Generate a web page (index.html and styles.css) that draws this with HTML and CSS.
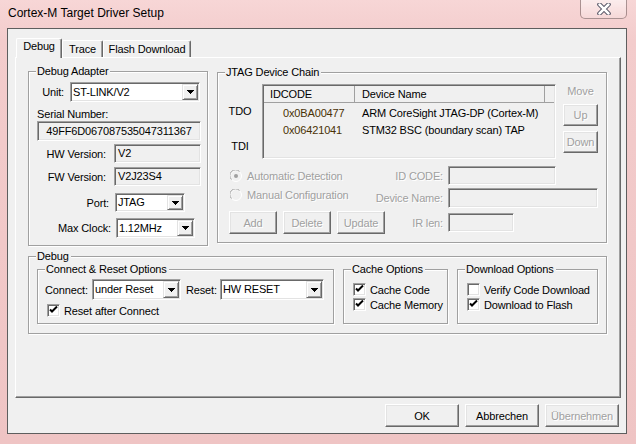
FILE: index.html
```html
<!DOCTYPE html>
<html>
<head>
    <title>Cortex-M Target Driver Setup</title>
    <link rel="stylesheet" href="styles.css">
</head>
<body>
<div class="window">
    <div class="titlebar">
        <span class="title">Cortex-M Target Driver Setup</span>
        <div class="close-btn">
            <svg width="14" height="12" viewBox="0 0 14 12">
                <path d="M2.5 1.5L11.5 10.5M11.5 1.5L2.5 10.5" stroke="#4b4b5c" stroke-width="4.5" stroke-linecap="round"/>
                <path d="M2.5 1.5L11.5 10.5M11.5 1.5L2.5 10.5" stroke="#fff" stroke-width="2.5" stroke-linecap="round"/>
            </svg>
        </div>
    </div>

    <div class="client">
        <div class="tabs">
            <div class="tab tab-debug active">Debug</div>
            <div class="tab tab-trace">Trace</div>
            <div class="tab tab-flash">Flash Download</div>
        </div>

        <div class="tab-page">
            <div class="top-row">
                <!-- Debug Adapter -->
                <div class="group adapter">
                    <span class="group-title">Debug Adapter</span>
                    <div class="field-row unit-row">
                        <span class="field-label">Unit:</span>
                        <div class="combo">
                            <span class="combo-text">ST-LINK/V2</span>
                            <span class="combo-btn"><svg width="7" height="4" viewBox="0 0 7 4"><path d="M0 0h7v1h-1v1h-1v1h-1v1h-1v-1h-1v-1h-1v-1h-1z"/></svg></span>
                        </div>
                    </div>
                    <div class="serial-label">Serial Number:</div>
                    <div class="textbox serial">49FF6D067087535047311367</div>
                    <div class="field-row hw-row">
                        <span class="field-label">HW Version:</span>
                        <div class="textbox">V2</div>
                    </div>
                    <div class="field-row fw-row">
                        <span class="field-label">FW Version:</span>
                        <div class="textbox">V2J23S4</div>
                    </div>
                    <div class="field-row port-row">
                        <span class="field-label">Port:</span>
                        <div class="combo">
                            <span class="combo-text">JTAG</span>
                            <span class="combo-btn"><svg width="7" height="4" viewBox="0 0 7 4"><path d="M0 0h7v1h-1v1h-1v1h-1v1h-1v-1h-1v-1h-1v-1h-1z"/></svg></span>
                        </div>
                    </div>
                    <div class="field-row clock-row">
                        <span class="field-label">Max Clock:</span>
                        <div class="combo">
                            <span class="combo-text">1.12MHz</span>
                            <span class="combo-btn"><svg width="7" height="4" viewBox="0 0 7 4"><path d="M0 0h7v1h-1v1h-1v1h-1v1h-1v-1h-1v-1h-1v-1h-1z"/></svg></span>
                        </div>
                    </div>
                </div>

                <!-- JTAG Device Chain -->
                <div class="group jtag">
                    <span class="group-title">JTAG Device Chain</span>
                    <div class="chain-row">
                        <div class="tdo-tdi">
                            <div class="tdo">TDO</div>
                            <div class="tdi">TDI</div>
                        </div>
                        <div class="listview">
                            <div class="lv-header">
                                <span class="col-id">IDCODE</span>
                                <span class="col-name">Device Name</span>
                                <span class="col-rest"></span>
                            </div>
                            <div class="lv-body">
                                <div class="lv-row">
                                    <span class="col-id">0x0BA00477</span>
                                    <span class="col-name">ARM CoreSight JTAG-DP (Cortex-M)</span>
                                </div>
                                <div class="lv-row">
                                    <span class="col-id">0x06421041</span>
                                    <span class="col-name">STM32 BSC (boundary scan) TAP</span>
                                </div>
                            </div>
                        </div>
                        <div class="move-col">
                            <div class="move-label">Move</div>
                            <button class="btn btn-up" disabled>Up</button>
                            <button class="btn btn-down" disabled>Down</button>
                        </div>
                    </div>

                    <div class="config-row row-auto">
                        <div class="config-left">
                            <div class="radio">
                                <svg width="12" height="12" viewBox="0 0 12 12">
                                    <circle cx="6" cy="6" r="5.5" fill="#f0f0f0" stroke="#fff"/>
                                    <path d="M1.5 9.5A5.5 5.5 0 0 1 9.5 1.5" fill="none" stroke="#a0a0a0"/>
                                    <circle cx="6" cy="6" r="2" fill="#a0a0a0"/>
                                </svg>
                                <span>Automatic Detection</span>
                            </div>
                        </div>
                        <span class="config-label">ID CODE:</span>
                        <div class="textbox idcode-box"></div>
                    </div>
                    <div class="config-row row-manual">
                        <div class="config-left">
                            <div class="radio">
                                <svg width="12" height="12" viewBox="0 0 12 12">
                                    <circle cx="6" cy="6" r="5.5" fill="#f0f0f0" stroke="#fff"/>
                                    <path d="M1.5 9.5A5.5 5.5 0 0 1 9.5 1.5" fill="none" stroke="#a0a0a0"/>
                                </svg>
                                <span>Manual Configuration</span>
                            </div>
                        </div>
                        <span class="config-label">Device Name:</span>
                        <div class="textbox devname-box"></div>
                    </div>
                    <div class="config-row row-buttons">
                        <div class="config-left chain-buttons">
                            <button class="btn" disabled>Add</button>
                            <button class="btn" disabled>Delete</button>
                            <button class="btn" disabled>Update</button>
                        </div>
                        <span class="config-label">IR len:</span>
                        <div class="textbox irlen-box"></div>
                    </div>
                </div>
            </div>

            <!-- Debug -->
            <div class="group debug">
                <span class="group-title">Debug</span>
                <div class="group connect">
                    <span class="group-title">Connect &amp; Reset Options</span>
                    <div class="connect-row">
                        <span class="connect-label">Connect:</span>
                        <div class="combo connect-combo">
                            <span class="combo-text">under Reset</span>
                            <span class="combo-btn"><svg width="7" height="4" viewBox="0 0 7 4"><path d="M0 0h7v1h-1v1h-1v1h-1v1h-1v-1h-1v-1h-1v-1h-1z"/></svg></span>
                        </div>
                        <span class="reset-label">Reset:</span>
                        <div class="combo reset-combo">
                            <span class="combo-text">HW RESET</span>
                            <span class="combo-btn"><svg width="7" height="4" viewBox="0 0 7 4"><path d="M0 0h7v1h-1v1h-1v1h-1v1h-1v-1h-1v-1h-1v-1h-1z"/></svg></span>
                        </div>
                    </div>
                    <div class="check reset-check">
                        <span class="check-box"><svg width="9" height="9" viewBox="0 0 9 9"><path d="M1 3.5l2 2 5-5" fill="none" stroke="#000" stroke-width="2"/></svg></span>
                        <span>Reset after Connect</span>
                    </div>
                </div>
                <div class="group cache">
                    <span class="group-title">Cache Options</span>
                    <div class="check-list">
                        <div class="check">
                            <span class="check-box"><svg width="9" height="9" viewBox="0 0 9 9"><path d="M1 3.5l2 2 5-5" fill="none" stroke="#000" stroke-width="2"/></svg></span>
                            <span>Cache Code</span>
                        </div>
                        <div class="check">
                            <span class="check-box"><svg width="9" height="9" viewBox="0 0 9 9"><path d="M1 3.5l2 2 5-5" fill="none" stroke="#000" stroke-width="2"/></svg></span>
                            <span>Cache Memory</span>
                        </div>
                    </div>
                </div>
                <div class="group download">
                    <span class="group-title">Download Options</span>
                    <div class="check-list">
                        <div class="check">
                            <span class="check-box"></span>
                            <span>Verify Code Download</span>
                        </div>
                        <div class="check">
                            <span class="check-box"><svg width="9" height="9" viewBox="0 0 9 9"><path d="M1 3.5l2 2 5-5" fill="none" stroke="#000" stroke-width="2"/></svg></span>
                            <span>Download to Flash</span>
                        </div>
                    </div>
                </div>
            </div>
        </div>

        <div class="dialog-buttons">
            <button class="btn dlg-btn">OK</button>
            <button class="btn dlg-btn">Abbrechen</button>
            <button class="btn dlg-btn" disabled>Übernehmen</button>
        </div>
    </div>
</div>
</body>
</html>
```

FILE: styles.css
```css
body {
    margin: 0;
    font-family: "Liberation Sans", Arial, sans-serif;
    font-size: 11px;
    letter-spacing: -0.15px;
    color: #000;
    background-color: #ebc3c3;
}
.window {
    width: 636px;
    height: 444px;
    overflow: hidden;
    background: linear-gradient(#f7d6d6, #f3cccc 40px, #efc4c4);
}

/* title bar */
.titlebar {
    height: 28px;
    display: flex;
    justify-content: space-between;
    align-items: flex-start;
    padding-left: 8px;
}
.title {
    font-size: 12px;
    letter-spacing: 0;
    line-height: 27px;
}
.close-btn {
    width: 47px;
    height: 19px;
    margin-right: 9px;
    box-sizing: border-box;
    border: 1px solid rgba(90, 60, 60, 0.5);
    border-top: none;
    border-radius: 0 0 5px 5px;
    background: linear-gradient(rgba(255, 255, 255, 0.55), rgba(255, 255, 255, 0.15));
    display: flex;
    align-items: center;
    justify-content: center;
}

/* client area */
.client {
    margin-left: 7px;
    width: 620px;
    height: 406px;
    box-sizing: border-box;
    border: 1px solid #5e5e5e;
    background-color: #f0f0f0;
    padding: 9px 0 0 7px;
}

/* tabs */
.tabs {
    display: flex;
    align-items: flex-end;
    height: 19px;
    margin-left: 1px;
}
.tab {
    height: 17px;
    line-height: 16px;
    box-sizing: border-box;
    border: 1px solid;
    border-color: #fff #696969 transparent #fff;
    border-bottom: none;
    border-radius: 2px 2px 0 0;
    box-shadow: inset -1px 0 #a0a0a0;
    text-align: center;
    background-color: #f0f0f0;
}
.tab.active {
    height: 20px;
    line-height: 15px;
    margin-bottom: -1px;
    position: relative;
    z-index: 1;
}
.tab-debug { width: 46px; }
.tab-trace { width: 41px; }
.tab-flash { width: 88px; }

.tab-page {
    width: 606px;
    height: 341px;
    box-sizing: border-box;
    border: 1px solid;
    border-color: #fff #696969 #696969 #fff;
    box-shadow: inset -1px -1px #a0a0a0;
    padding: 13px 0 0 12px;
}
.top-row {
    display: flex;
    align-items: flex-start;
}

/* group boxes */
.group {
    position: relative;
    box-sizing: border-box;
    border: 1px solid #a0a0a0;
    box-shadow: 1px 1px 0 #fff, inset 1px 1px 0 #fff;
}
.group-title {
    position: absolute;
    top: -7px;
    left: 7px;
    padding: 0 2px 0 1px;
    line-height: 13px;
    background-color: #f0f0f0;
    white-space: nowrap;
}

/* controls */
.textbox, .combo {
    box-sizing: border-box;
    border: 1px solid;
    border-color: #a0a0a0 #fff #fff #a0a0a0;
    box-shadow: inset 1px 1px #696969, inset -1px -1px #e3e3e3;
    background-color: #f0f0f0;
    white-space: nowrap;
}
.textbox {
    padding-left: 3px;
}
.combo {
    display: flex;
    padding: 1px;
    background-color: #fff;
}
.combo-text {
    flex: 1;
    padding-left: 1px;
    overflow: hidden;
}
.combo-btn {
    width: 16px;
    box-sizing: border-box;
    border: 1px solid;
    border-color: #e3e3e3 #696969 #696969 #e3e3e3;
    box-shadow: inset 1px 1px #fff, inset -1px -1px #a0a0a0;
    background-color: #f0f0f0;
    display: flex;
    align-items: center;
    justify-content: center;
}
.btn {
    box-sizing: border-box;
    padding: 0;
    font-family: "Liberation Sans", Arial, sans-serif;
    font-size: 11px;
    letter-spacing: -0.15px;
    color: #000;
    background-color: #f0f0f0;
    border: 1px solid;
    border-color: #fff #696969 #696969 #fff;
    box-shadow: inset -1px -1px #a0a0a0, inset 1px 1px #e3e3e3;
}
.btn:disabled, .move-label, .radio, .config-label {
    color: #a0a0a0;
    text-shadow: 1px 1px #fff;
}

/* Debug Adapter */
.adapter {
    width: 180px;
    height: 175px;
}
.field-row {
    display: flex;
    align-items: center;
}
.field-label {
    text-align: right;
    white-space: nowrap;
}
.field-row .textbox, .field-row .combo {
    height: 100%;
}
.unit-row { margin-top: 10px; height: 20px; }
.unit-row .field-label { width: 35px; margin-right: 6px; }
.unit-row .combo { width: 130px; line-height: 16px; }
.serial-label {
    margin-top: 5px;
    padding-left: 8px;
    line-height: 14px;
}
.serial {
    margin-left: 8px;
    width: 164px;
    height: 20px;
    line-height: 18px;
    text-align: center;
    padding-left: 0;
}
.hw-row { margin-top: 3px; height: 19px; }
.fw-row { margin-top: 4px; height: 19px; }
.hw-row .field-label, .fw-row .field-label { width: 77px; margin-right: 8px; }
.hw-row .textbox, .fw-row .textbox { width: 87px; line-height: 17px; }
.port-row { margin-top: 7px; height: 19px; }
.port-row .field-label { width: 80px; margin-right: 6px; }
.port-row .combo { width: 70px; line-height: 15px; }
.clock-row { margin-top: 6px; height: 20px; }
.clock-row .field-label { width: 82px; margin-right: 5px; }
.clock-row .combo { width: 79px; line-height: 16px; }

/* JTAG Device Chain */
.jtag {
    margin-left: 9px;
    margin-top: 1px;
    width: 390px;
    height: 171px;
}
.chain-row {
    display: flex;
    margin-top: 11px;
    height: 75px;
}
.tdo-tdi {
    width: 44px;
    padding-top: 20px;
    text-align: center;
    line-height: 14px;
}
.tdi {
    margin-top: 21px;
}
.listview {
    width: 294px;
    height: 75px;
    box-sizing: border-box;
    border: 1px solid;
    border-color: #a0a0a0 #fff #fff #a0a0a0;
    box-shadow: inset 1px 1px #696969, inset -1px -1px #e3e3e3;
    padding: 1px;
    background-color: #f0f0f0;
}
.lv-header {
    display: flex;
    height: 17px;
    line-height: 16px;
    border-bottom: 1px solid #a0a0a0;
    box-sizing: border-box;
}
.lv-header span {
    box-sizing: border-box;
    border-right: 1px solid #a0a0a0;
    white-space: nowrap;
}
.lv-header .col-id { width: 91px; padding-left: 6px; }
.lv-header .col-name { width: 190px; padding-left: 7px; }
.lv-header .col-rest { width: 9px; border-right: none; }
.lv-body {
    padding-top: 2px;
}
.lv-row {
    display: flex;
    line-height: 17px;
    white-space: nowrap;
}
.lv-row .col-id { width: 91px; padding-left: 19px; box-sizing: border-box; color: #4a3206; }
.lv-row .col-name { padding-left: 7px; }

.move-col {
    margin-left: 7px;
    width: 35px;
    display: flex;
    flex-direction: column;
}
.move-label {
    line-height: 14px;
    text-align: center;
}
.btn-up { margin-top: 6px; height: 22px; }
.btn-down { margin-top: 5px; height: 22px; }

.config-row {
    display: flex;
    align-items: center;
}
.config-left {
    flex: none;
    width: 150px;
    min-width: 0;
    box-sizing: border-box;
    align-self: flex-start;
    white-space: nowrap;
}
.config-label {
    width: 75px;
    margin-right: 5px;
    text-align: right;
    white-space: nowrap;
}
.row-auto { margin-top: 7px; height: 19px; }
.row-auto .config-left { padding-top: 3px; }
.row-manual { margin-top: 3px; height: 20px; }
.row-buttons { margin-top: 3px; height: 23px; }
.radio {
    display: flex;
    align-items: center;
    height: 14px;
    padding-left: 12px;
}
.radio svg {
    margin-right: 5px;
}
.idcode-box { width: 108px; height: 19px; }
.devname-box { width: 150px; height: 20px; }
.irlen-box { width: 66px; height: 19px; }
.chain-buttons {
    display: flex;
    gap: 6px;
    padding-left: 11px;
    height: 23px;
}
.chain-buttons .btn {
    width: 48px;
    height: 23px;
    flex: none;
}

/* Debug */
.debug {
    margin-top: 10px;
    width: 579px;
    height: 78px;
    display: flex;
    gap: 9px;
    padding: 12px 0 0 8px;
}
.debug .group {
    height: 55px;
}
.connect { width: 297px; }
.cache { width: 105px; }
.download { width: 141px; }
.connect-row {
    display: flex;
    align-items: center;
    margin-top: 9px;
    height: 21px;
}
.connect-row .combo {
    height: 100%;
    line-height: 17px;
}
.connect-label { margin-left: 7px; width: 47px; }
.connect-combo { width: 89px; }
.reset-label { margin-left: 5px; width: 34px; }
.reset-combo { width: 104px; }
.check {
    display: flex;
    align-items: center;
    height: 15px;
    white-space: nowrap;
}
.reset-check {
    margin-top: 3px;
    padding-left: 9px;
}
.check-list {
    padding: 12px 0 0 9px;
}
.check-box {
    width: 13px;
    height: 13px;
    margin-right: 4px;
    box-sizing: border-box;
    border: 1px solid;
    border-color: #a0a0a0 #fff #fff #a0a0a0;
    box-shadow: inset 1px 1px #696969, inset -1px -1px #e3e3e3;
    background-color: #fff;
    display: flex;
    align-items: center;
    justify-content: center;
}

/* dialog buttons */
.dialog-buttons {
    width: 606px;
    display: flex;
    justify-content: flex-end;
    gap: 6px;
    margin-top: 6px;
    padding-right: 2px;
    box-sizing: border-box;
}
.dlg-btn {
    width: 74px;
    height: 23px;
}
```
